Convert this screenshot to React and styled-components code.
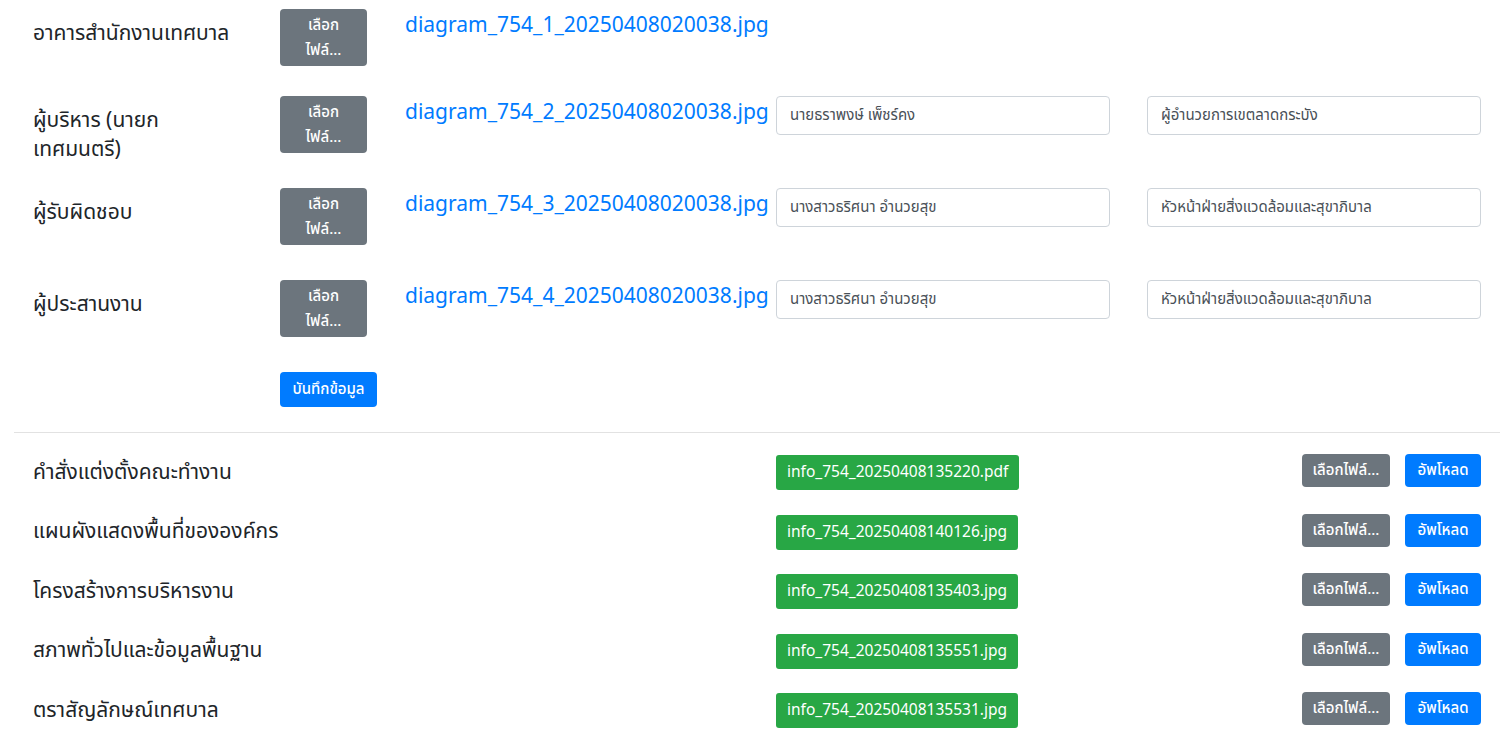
import React from 'react';
import styled, {createGlobalStyle} from "styled-components";

const GlobalStyle = createGlobalStyle`
  html, body {
    margin: 0;
    padding: 0;
    background: #ffffff;
  }
  body {
    font-family: "Noto Sans Thai", "Noto Sans", "Liberation Sans", sans-serif;
    color: #212529;
  }
`

const diagrams = [
    {label: "อาคารสำนักงานเทศบาล", file: "diagram_754_1_20250408020038.jpg", height: 87},
    {label: "ผู้บริหาร (นายก เทศมนตรี)", file: "diagram_754_2_20250408020038.jpg", height: 92,
        name: "นายธราพงษ์ เพ็ชร์คง", position: "ผู้อำนวยการเขตลาดกระบัง"},
    {label: "ผู้รับผิดชอบ", file: "diagram_754_3_20250408020038.jpg", height: 92,
        name: "นางสาวธริศนา อำนวยสุข", position: "หัวหน้าฝ่ายสิ่งแวดล้อมและสุขาภิบาล"},
    {label: "ผู้ประสานงาน", file: "diagram_754_4_20250408020038.jpg", height: 92,
        name: "นางสาวธริศนา อำนวยสุข", position: "หัวหน้าฝ่ายสิ่งแวดล้อมและสุขาภิบาล"},
]

const documents = [
    {label: "คำสั่งแต่งตั้งคณะทำงาน", file: "info_754_20250408135220.pdf"},
    {label: "แผนผังแสดงพื้นที่ขององค์กร", file: "info_754_20250408140126.jpg"},
    {label: "โครงสร้างการบริหารงาน", file: "info_754_20250408135403.jpg"},
    {label: "สภาพทั่วไปและข้อมูลพื้นฐาน", file: "info_754_20250408135551.jpg"},
    {label: "ตราสัญลักษณ์เทศบาล", file: "info_754_20250408135531.jpg"},
]

function App() {
    return (
        <Page>
            <GlobalStyle/>
            <DiagramSection>
                {diagrams.map((item) => (
                    <DiagramRow key={item.file} $height={item.height}>
                        <Label>{item.label}</Label>
                        <PickButton>เลือก<br/>ไฟล์...</PickButton>
                        <FileLink href="#">{item.file}</FileLink>
                        {item.name ? <TextInput defaultValue={item.name}/> : <span/>}
                        {item.position ? <TextInput defaultValue={item.position}/> : <span/>}
                    </DiagramRow>
                ))}
                <SaveRow>
                    <span/>
                    <SaveButton>บันทึกข้อมูล</SaveButton>
                </SaveRow>
            </DiagramSection>

            <Divider/>

            <DocumentSection>
                {documents.map((doc) => (
                    <DocumentRow key={doc.file}>
                        <DocLabel>{doc.label}</DocLabel>
                        <div>
                            <FileBadge>{doc.file}</FileBadge>
                        </div>
                        <Actions>
                            <SmallButton $variant="secondary" $width={88}>เลือกไฟล์...</SmallButton>
                            <SmallButton $variant="primary" $width={76}>อัพโหลด</SmallButton>
                        </Actions>
                    </DocumentRow>
                ))}
            </DocumentSection>
        </Page>
    );
}

const Page = styled.div`
  width: 1505px;
  padding-top: 9px;
`

const DiagramSection = styled.div`
  display: flex;
  flex-direction: column;
`

const DiagramRow = styled.div`
  display: grid;
  grid-template-columns: 247px 125px 371px 371px 334px;
  align-items: start;
  height: ${props => props.$height}px;
  padding-left: 33px;
`

const Label = styled.div`
  font-size: 21px;
  line-height: 29px;
  padding-top: 10px;
  max-width: 206px;
  color: #212529;
`

const PickButton = styled.button`
  width: 87px;
  height: 57px;
  border: none;
  border-radius: 4px;
  background: #6c757d;
  color: #ffffff;
  font-family: inherit;
  font-size: 15px;
  font-weight: 500;
  line-height: 25px;
  padding: 0;
`

const FileLink = styled.a`
  font-size: 21px;
  line-height: 33px;
  color: #007bff;
  text-decoration: none;
  white-space: nowrap;
`

const TextInput = styled.input`
  box-sizing: border-box;
  width: 334px;
  height: 39px;
  border: 1px solid #ced4da;
  border-radius: 4px;
  padding: 0 13px;
  font-family: inherit;
  font-size: 15px;
  color: #495057;
  background: #fff;
`

const SaveRow = styled.div`
  display: grid;
  grid-template-columns: 247px auto;
  padding-left: 33px;
  height: 60px;
  align-items: start;
`

const SaveButton = styled.button`
  width: 97px;
  height: 35px;
  border: none;
  border-radius: 4px;
  background: #007bff;
  color: #ffffff;
  font-family: inherit;
  font-size: 15px;
  font-weight: 500;
  padding: 0;
`

const Divider = styled.hr`
  margin: 0 5px 0 14px;
  border: none;
  border-top: 1px solid #e2e2e2;
`

const DocumentSection = styled.div`
  display: flex;
  flex-direction: column;
  padding-top: 10px;
`

const DocumentRow = styled.div`
  display: grid;
  grid-template-columns: 743px 526px auto;
  align-items: center;
  height: 59.5px;
  padding-left: 33px;
`

const DocLabel = styled.div`
  font-size: 21px;
  line-height: 30px;
  color: #212529;
`

const FileBadge = styled.span`
  display: inline-flex;
  align-items: center;
  height: 35px;
  padding: 0 11px;
  border-radius: 3px;
  background: #28a745;
  color: #ffffff;
  font-size: 15.5px;
`

const Actions = styled.div`
  display: flex;
  gap: 15px;
  margin-bottom: 4px;
`

const SmallButton = styled.button`
  width: ${props => props.$width}px;
  height: 33px;
  border: none;
  border-radius: 4px;
  background: ${props => props.$variant === "primary" ? "#007bff" : "#6c757d"};
  color: #ffffff;
  font-family: inherit;
  font-size: 15px;
  font-weight: 500;
  padding: 0 10px;
  white-space: nowrap;
  overflow: hidden;
  text-overflow: ellipsis;
`

export default App;
